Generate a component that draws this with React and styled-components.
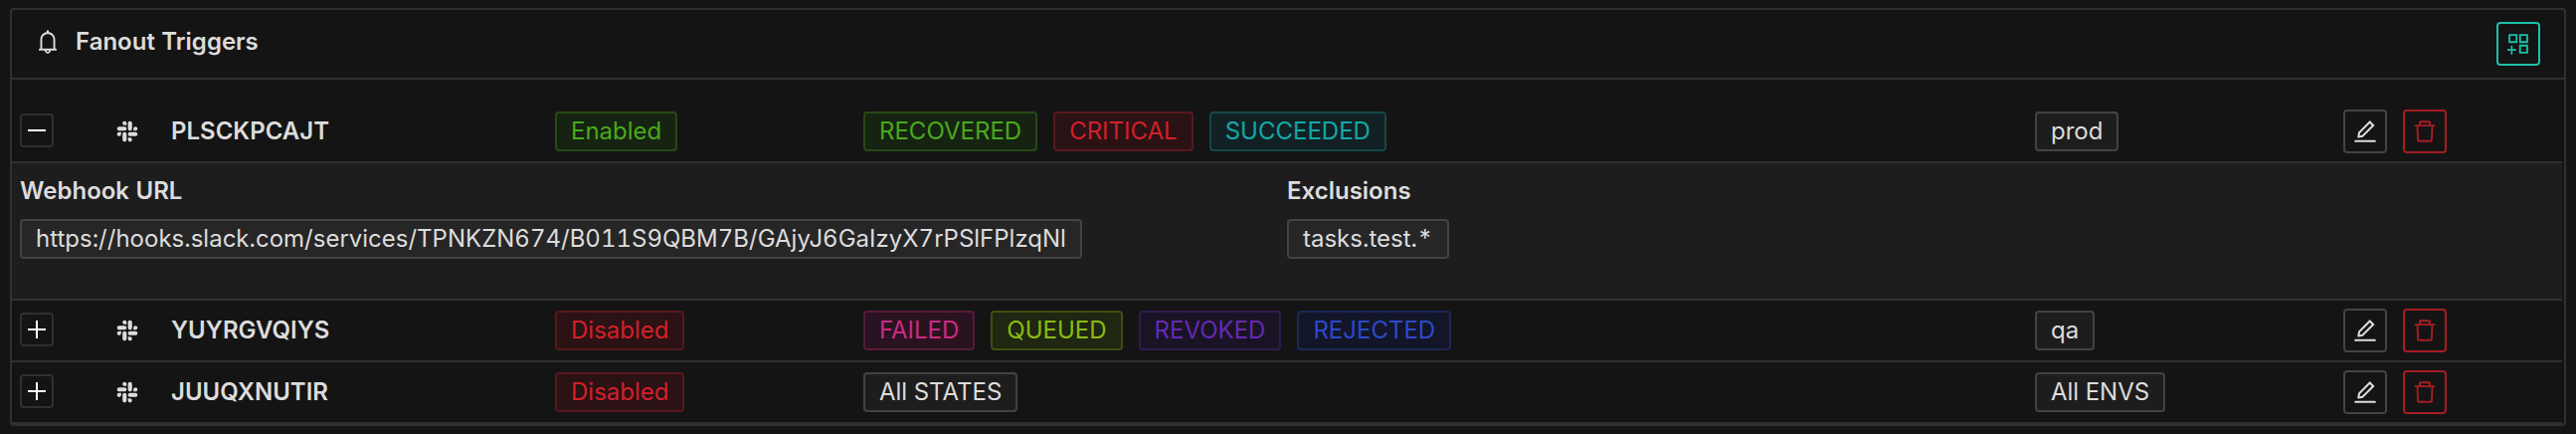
import React, { useState } from 'react';
import styled, { createGlobalStyle, css } from 'styled-components';
import {
  AiOutlineAppstoreAdd,
  AiOutlineBell,
  AiOutlineDelete,
  AiOutlineEdit,
  AiOutlineSlack,
} from 'react-icons/ai';

const GlobalStyle = createGlobalStyle`
  * {
    box-sizing: border-box;
  }
  body {
    margin: 0;
    background: #141414;
    color: #dcdcdc;
    font-family: Inter, "Liberation Sans", sans-serif;
    font-size: 24px;
    font-variant-numeric: tabular-nums;
    line-height: 38px;
  }
`;

const Page = styled.main`
  padding: 8px 10px;
`;

const Card = styled.section`
  border: 2px solid #303030;
  border-radius: 4px;
  background: #141414;
`;

const CardHeader = styled.header`
  display: flex;
  align-items: center;
  justify-content: space-between;
  padding: 12px 24px;
  border-bottom: 2px solid #303030;
`;

const CardTitle = styled.h1`
  display: flex;
  align-items: center;
  gap: 16px;
  margin: 0;
  padding-bottom: 4px;
  font-size: 24px;
  font-weight: 600;
`;

const CardBody = styled.div`
  padding: 22px 2px 0 0;
`;

const buttonTones = {
  default: css`
    border-color: #434343;
    color: #dcdcdc;
  `,
  primary: css`
    border-color: #1cbfa9;
    color: #1cbfa9;
  `,
  danger: css`
    border-color: #a61d24;
    color: #a61d24;
  `,
};

const IconButton = styled.button`
  display: inline-flex;
  align-items: center;
  justify-content: center;
  width: 44px;
  height: 44px;
  padding: 0;
  border: 2px solid;
  border-radius: 4px;
  background: transparent;
  cursor: pointer;
  ${({ $tone = 'default' }) => buttonTones[$tone]}
`;

const Table = styled.table`
  width: 100%;
  table-layout: fixed;
  border-collapse: separate;
  border-spacing: 0;
`;

const Col = styled.col`
  width: ${({ $width }) => ($width ? `${$width}px` : 'auto')};
`;

const Cell = styled.td`
  padding: 8px;
  border-bottom: 2px solid #303030;
  text-align: left;
  vertical-align: middle;
`;

const ExpandCell = styled(Cell)`
  padding-top: 12px;
  vertical-align: top;
`;

const DetailCell = styled(Cell)`
  padding-bottom: 40px;
  background: #1d1d1d;
`;

const NameCell = styled(Cell)`
  font-weight: 600;
`;

const ExpandButton = styled.button`
  display: flex;
  align-items: center;
  justify-content: center;
  width: 34px;
  height: 34px;
  padding: 0;
  border: 2px solid #303030;
  border-radius: 4px;
  background: transparent;
  color: #ffffff;
  cursor: pointer;
`;

const Inline = styled.div`
  display: flex;
  align-items: center;
  gap: 16px;
`;

const tagTones = {
  default: ['#dcdcdc', '#1d1d1d', '#434343'],
  detail: ['#dcdcdc', '#262626', '#434343'],
  green: ['#49aa19', '#162312', '#274916'],
  red: ['#d32029', '#2a1215', '#58181c'],
  cyan: ['#13a8a8', '#112123', '#144848'],
  magenta: ['#cb2b83', '#291321', '#551c3b'],
  lime: ['#8bbb11', '#1f2611', '#3e4f13'],
  purple: ['#642ab5', '#1a1325', '#301c4d'],
  geekblue: ['#2b4acb', '#131629', '#1c2755'],
};

const Tag = styled.span`
  padding: 0 14px;
  border: 2px solid ${({ $tone }) => tagTones[$tone][2]};
  border-radius: 4px;
  background: ${({ $tone }) => tagTones[$tone][1]};
  color: ${({ $tone }) => tagTones[$tone][0]};
  line-height: 36px;
  white-space: nowrap;
`;

const Details = styled.dl`
  display: grid;
  grid-template-columns: 1fr 1fr;
  margin: 0;
`;

const DetailTerm = styled.dt`
  margin-bottom: 8px;
  font-weight: 600;
  line-height: 40px;
`;

const DetailValue = styled.dd`
  display: flex;
  margin: 0;
`;

const triggers = [
  {
    name: 'PLSCKPCAJT',
    enabled: true,
    states: [
      ['RECOVERED', 'green'],
      ['CRITICAL', 'red'],
      ['SUCCEEDED', 'cyan'],
    ],
    env: 'prod',
    details: [
      ['Webhook URL', 'https://hooks.slack.com/services/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'],
      ['Exclusions', 'tasks.test.*'],
    ],
  },
  {
    name: 'YUYRGVQIYS',
    enabled: false,
    states: [
      ['FAILED', 'magenta'],
      ['QUEUED', 'lime'],
      ['REVOKED', 'purple'],
      ['REJECTED', 'geekblue'],
    ],
    env: 'qa',
    details: [],
  },
  {
    name: 'JUUQXNUTIR',
    enabled: false,
    states: [['All STATES', 'default']],
    env: 'All ENVS',
    details: [],
  },
];

// Trims the empty margin that the icon set leaves round each glyph.
function Icon({ as: Glyph }) {
  return <Glyph size={24} viewBox="64 64 896 896" aria-hidden="true" />;
}

function ExpandIcon({ open }) {
  return (
    <svg width="18" height="18" viewBox="0 0 18 18" fill="currentColor" aria-hidden="true">
      <rect x="0" y="8" width="18" height="2" />
      {!open && <rect x="8" y="0" width="2" height="18" />}
    </svg>
  );
}

function TriggerRows({ trigger, initiallyOpen }) {
  const [open, setOpen] = useState(initiallyOpen);
  return (
    <>
      <tr>
        <ExpandCell>
          <ExpandButton
            type="button"
            aria-expanded={open}
            aria-label={open ? 'Collapse row' : 'Expand row'}
            onClick={() => setOpen(!open)}
          >
            <ExpandIcon open={open} />
          </ExpandButton>
        </ExpandCell>
        <Cell>
          <Inline>
            <Icon as={AiOutlineSlack} />
          </Inline>
        </Cell>
        <NameCell as="th" scope="row">
          {trigger.name}
        </NameCell>
        <Cell>
          <Inline>
            <Tag $tone={trigger.enabled ? 'green' : 'red'}>{trigger.enabled ? 'Enabled' : 'Disabled'}</Tag>
          </Inline>
        </Cell>
        <Cell>
          <Inline>
            {trigger.states.map(([label, tone]) => (
              <Tag key={label} $tone={tone}>
                {label}
              </Tag>
            ))}
          </Inline>
        </Cell>
        <Cell>
          <Inline>
            <Tag $tone="default">{trigger.env}</Tag>
          </Inline>
        </Cell>
        <Cell>
          <Inline>
            <IconButton type="button" aria-label={`Edit ${trigger.name}`}>
              <Icon as={AiOutlineEdit} />
            </IconButton>
            <IconButton type="button" $tone="danger" aria-label={`Delete ${trigger.name}`}>
              <Icon as={AiOutlineDelete} />
            </IconButton>
          </Inline>
        </Cell>
      </tr>
      {open && (
        <tr>
          <DetailCell colSpan={7}>
            <Details>
              {trigger.details.map(([term, value]) => (
                <div key={term}>
                  <DetailTerm>{term}</DetailTerm>
                  <DetailValue>
                    <Tag $tone="detail">{value}</Tag>
                  </DetailValue>
                </div>
              ))}
            </Details>
          </DetailCell>
        </tr>
      )}
    </>
  );
}

export default function App() {
  return (
    <>
      <GlobalStyle />
      <Page>
        <Card>
          <CardHeader>
            <CardTitle>
              <Icon as={AiOutlineBell} />
              Fanout Triggers
            </CardTitle>
            <IconButton type="button" $tone="primary" aria-label="Add trigger">
              <Icon as={AiOutlineAppstoreAdd} />
            </IconButton>
          </CardHeader>
          <CardBody>
            <Table>
              <colgroup>
                <Col $width={96} />
                <Col $width={56} />
                <Col $width={386} />
                <Col $width={310} />
                <Col />
                <Col $width={310} />
                <Col $width={228} />
              </colgroup>
              <tbody>
                {triggers.map((trigger, index) => (
                  <TriggerRows key={trigger.name} trigger={trigger} initiallyOpen={index === 0} />
                ))}
              </tbody>
            </Table>
          </CardBody>
        </Card>
      </Page>
    </>
  );
}
